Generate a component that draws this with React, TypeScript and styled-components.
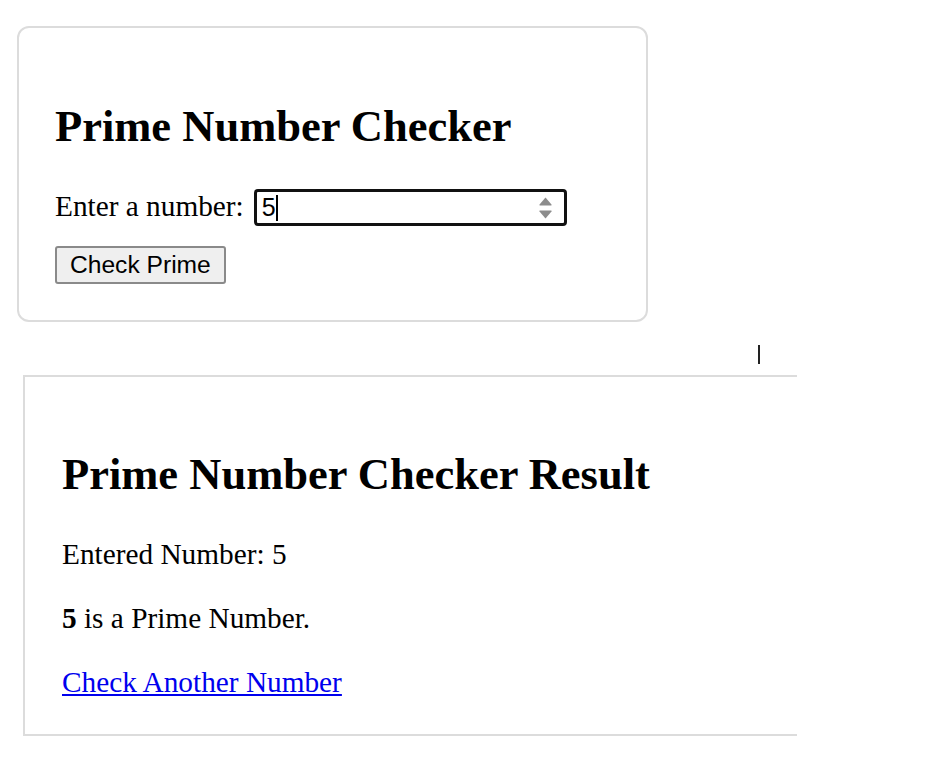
import React, { useState } from 'react';
import styled, { createGlobalStyle } from 'styled-components';

const GlobalStyle = createGlobalStyle`
    html, body {
        margin: 0;
        padding: 0;
        background: #FFFFFF;
    }
    body {
        font-family: "Liberation Serif", "Times New Roman", serif;
        color: #000000;
    }
`;

export const Page = styled.div`
    position: relative;
    width: 926px;
    min-height: 757px;
    padding-top: 26px;
    box-sizing: border-box;
`;

export const CheckerCard = styled.div`
    width: 631px;
    margin-left: 17px;
    padding: 36px;
    border: 2px solid #dcdcdc;
    border-radius: 12px;
    box-sizing: border-box;
`;

export const ResultCard = styled.div`
    width: 774px;
    margin-left: 23px;
    margin-top: 53px;
    padding: 37px 37px 35px 37px;
    border: 2px solid #dcdcdc;
    border-right: none;
    box-sizing: border-box;
`;

export const Title = styled.h2<{ $top: number; $gap: number }>`
    font-family: "Liberation Serif", "Times New Roman", serif;
    font-size: 44.5px;
    font-weight: bold;
    line-height: 49px;
    margin: ${(p) => p.$top}px 0 ${(p) => p.$gap}px 0;
`;

export const FormRow = styled.div`
    display: flex;
    align-items: center;
    gap: 10px;
    height: 37px;
    margin-bottom: 20px;
`;

export const Label = styled.label`
    font-size: 29.3px;
    line-height: 30px;
    margin-bottom: 4px;
`;

export const InputBox = styled.div`
    position: relative;
    display: flex;
    align-items: center;
    width: 313px;
    height: 37px;
    border: 3px solid #111111;
    border-radius: 4px;
    box-sizing: border-box;
    padding: 0 11px 0 5px;
`;

export const NumberInput = styled.input`
    flex: 1;
    border: none;
    outline: none;
    padding: 0;
    margin: 0;
    font-family: "Liberation Sans", Arial, sans-serif;
    font-size: 25px;
    color: #000000;
    background: transparent;
    min-width: 0;
    -moz-appearance: textfield;
    &::-webkit-outer-spin-button,
    &::-webkit-inner-spin-button {
        -webkit-appearance: none;
        margin: 0;
    }
`;

export const Caret = styled.span`
    position: absolute;
    left: 19px;
    top: 3px;
    width: 2px;
    height: 26px;
    background: #000000;
`;

export const Spinner = styled.svg`
    flex: none;
    display: block;
`;

export const CheckButton = styled.button`
    display: block;
    height: 38px;
    padding: 0 13px;
    font-family: "Liberation Sans", Arial, sans-serif;
    font-size: 24.6px;
    color: #000000;
    background-color: #efefef;
    border: 2px solid #8a8a8a;
    border-radius: 3px;
    cursor: pointer;
`;

export const Text = styled.p`
    font-size: 29.3px;
    line-height: 34px;
    margin: 0 0 30px 0;
`;

export const AnotherLink = styled.a`
    font-size: 29.3px;
    line-height: 34px;
    color: #0000ee;
    text-decoration: underline;
`;

export const MouseCursor = styled.span`
    position: absolute;
    left: 758px;
    top: 345px;
    width: 2px;
    height: 19px;
    background: #222222;
`;

const App: React.FC = () => {
    const [value, setValue] = useState('5');

    return (
        <Page>
            <GlobalStyle />

            <CheckerCard>
                <Title $top={38} $gap={38}>Prime Number Checker</Title>
                <FormRow>
                    <Label htmlFor="num">Enter a number:</Label>
                    <InputBox>
                        <NumberInput
                            id="num"
                            type="number"
                            value={value}
                            onChange={(e) => setValue(e.target.value)}
                        />
                        <Caret />
                        <Spinner width="15" height="24" viewBox="0 0 15 24">
                            <path d="M7.5 1.5 L13.5 8.5 Q14 9.5 13 9.5 L2 9.5 Q1 9.5 1.5 8.5 Z" fill="#8c8c8c" />
                            <path d="M7.5 22.5 L13.5 15.5 Q14 14.5 13 14.5 L2 14.5 Q1 14.5 1.5 15.5 Z" fill="#8c8c8c" />
                        </Spinner>
                    </InputBox>
                </FormRow>
                <CheckButton type="button">Check Prime</CheckButton>
            </CheckerCard>

            <MouseCursor />

            <ResultCard>
                <Title $top={36} $gap={38}>Prime Number Checker Result</Title>
                <Text>Entered Number: {value}</Text>
                <Text><b>{value}</b> is a Prime Number.</Text>
                <AnotherLink href="#">Check Another Number</AnotherLink>
            </ResultCard>
        </Page>
    );
};

export default App;
